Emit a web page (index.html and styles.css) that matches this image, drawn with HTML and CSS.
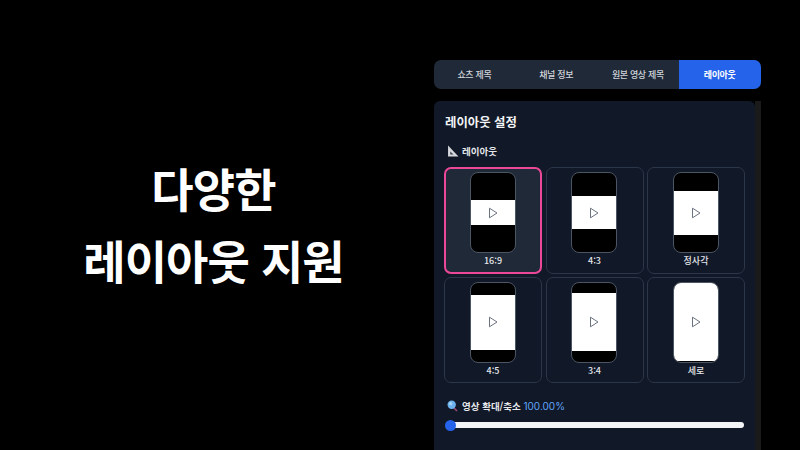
FILE: index.html
```html
<!DOCTYPE html>
<html lang="ko">
<head>
<meta charset="utf-8">
<title>레이아웃 지원</title>
<link rel="stylesheet" href="styles.css">
</head>
<body>
<main class="stage">
  <section class="hero">
    <h1>다양한<br>레이아웃 지원</h1>
  </section>
  <section class="side">
    <nav class="tabs">
      <span class="tab">쇼츠 제목</span>
      <span class="tab">채널 정보</span>
      <span class="tab">원본 영상 제목</span>
      <span class="tab tab-active">레이아웃</span>
    </nav>
    <div class="panel-wrap">
      <div class="panel">
        <h2>레이아웃 설정</h2>
        <div class="label"><span class="emoji">
          <svg width="12" height="12" viewBox="0 0 11 11"><path d="M1 .5V10.5H10.5Z" fill="#d5d8dc"/><path d="M3 6V8.7H6Z" fill="#3d4350"/></svg>
        </span>레이아웃</div>
        <div class="grid">
          <div class="card card-selected">
            <div class="phone"><div class="video" style="height:25px"><svg class="play" viewBox="0 0 10 12"><path d="M1.5 1.2V10.8L9 6Z"/></svg></div></div>
            <span class="cap">16:9</span>
          </div>
          <div class="card">
            <div class="phone"><div class="video" style="height:33px"><svg class="play" viewBox="0 0 10 12"><path d="M1.5 1.2V10.8L9 6Z"/></svg></div></div>
            <span class="cap">4:3</span>
          </div>
          <div class="card">
            <div class="phone"><div class="video" style="height:44px"><svg class="play" viewBox="0 0 10 12"><path d="M1.5 1.2V10.8L9 6Z"/></svg></div></div>
            <span class="cap">정사각</span>
          </div>
          <div class="card">
            <div class="phone"><div class="video" style="height:55px"><svg class="play" viewBox="0 0 10 12"><path d="M1.5 1.2V10.8L9 6Z"/></svg></div></div>
            <span class="cap">4:5</span>
          </div>
          <div class="card">
            <div class="phone"><div class="video" style="height:58px"><svg class="play" viewBox="0 0 10 12"><path d="M1.5 1.2V10.8L9 6Z"/></svg></div></div>
            <span class="cap">3:4</span>
          </div>
          <div class="card">
            <div class="phone"><div class="video" style="height:78px"><svg class="play" viewBox="0 0 10 12"><path d="M1.5 1.2V10.8L9 6Z"/></svg></div></div>
            <span class="cap">세로</span>
          </div>
        </div>
        <div class="label zoom"><span class="emoji">
          <svg width="11" height="12" viewBox="0 0 11 12"><path d="M6.5 7.5L10 11" stroke="#9a4a72" stroke-width="1.6"/><circle cx="4.7" cy="4.7" r="4.2" fill="#6db3ee"/><circle cx="3.7" cy="3.7" r="1.6" fill="#a9d6f7"/></svg>
        </span>영상 확대/축소 <span class="value">100.00%</span></div>
        <div class="slider"><span class="thumb"></span></div>
      </div>
      <div class="scrollbar"></div>
    </div>
  </section>
</main>
</body>
</html>
```

FILE: styles.css
```css
* { box-sizing: border-box; }
html, body { margin: 0; height: 100%; background: #000; overflow: hidden; }
body { font-family: "Noto Sans CJK KR", "Noto Sans", sans-serif; color: #f3f4f6; }
.stage { display: flex; width: 800px; height: 450px; }
.hero { width: 427px; padding-top: 151px; flex: none; }
.hero h1 { margin: 0; font-size: 46px; line-height: 72px; font-weight: 700; color: #fff; text-align: center; letter-spacing: -0.9px; }
.side { width: 327px; margin-left: 7px; padding-top: 60px; flex: none; display: flex; flex-direction: column; gap: 12px; }
.tabs { display: flex; height: 29px; border-radius: 7px; overflow: hidden; background: #1f2937; }
.tab { flex: 1; display: flex; align-items: center; justify-content: center; padding-right: 1px; font-size: 9px; letter-spacing: -0.35px; font-weight: 500; color: #d1d5db; }
.tab-active { background: #2563eb; color: #fff; font-weight: 700; }
.panel-wrap { display: flex; height: 349px; }
.panel { width: 321px; height: 100%; background: #111827; border-radius: 6px 6px 0 0; padding: 11px 10px 0; }
.scrollbar { width: 6px; background: #1a1a1a; }
.panel h2 { margin: 0 0 11px 1px; font-size: 12.4px; line-height: 20px; font-weight: 700; color: #f3f4f6; }
.label { display: flex; align-items: center; height: 16px; font-size: 9.5px; font-weight: 700; color: #e5e7eb; margin-bottom: 8px; padding-left: 3px; white-space: pre; }
.emoji { width: 13px; height: 12px; margin-right: 2px; display: flex; align-items: center; }
.grid { display: grid; grid-template-columns: repeat(3, 98px); grid-auto-rows: 106.5px; column-gap: 3.5px; row-gap: 3px; }
.card { border: 1px solid #2b3648; border-radius: 7px; display: flex; flex-direction: column; align-items: center; padding-top: 4px; }
.card-selected { background: #1f2937; border: 2px solid #ec4899; padding-top: 3px; }
.phone { width: 46px; height: 81px; margin-right: 1px; background: #000; border: 1.5px solid #4b5563; border-radius: 8px; overflow: hidden; display: flex; align-items: center; justify-content: center; flex: none; }
.video { width: 100%; background: #fff; display: flex; align-items: center; justify-content: center; flex: none; }
.play { width: 10px; height: 12px; fill: none; stroke: #6b7280; stroke-width: 1; }
.cap { margin-top: 1px; font-size: 9px; line-height: 14px; font-weight: 500; color: #e5e7eb; }
.zoom { margin-top: 15px; margin-bottom: 8px; }
.value { font-family: Inter, "Noto Sans", sans-serif; font-size: 10px; color: #60a5fa; font-weight: 400; }
.slider { position: relative; width: 298px; height: 6px; background: #f3f4f6; border-radius: 3px; margin-left: 2px; }
.thumb { position: absolute; left: -1px; top: -2.5px; width: 11px; height: 11px; border-radius: 50%; background: #2563eb; }
```
